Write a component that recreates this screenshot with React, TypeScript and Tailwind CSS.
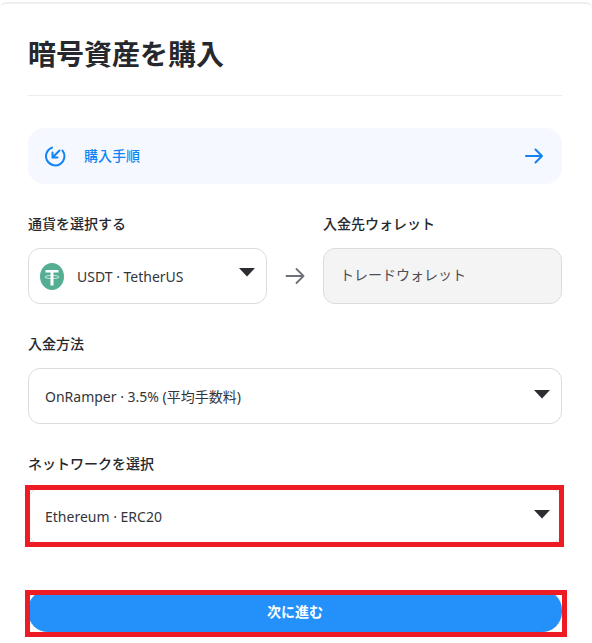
import React from 'react';

const font = { fontFamily: '"Noto Sans", "Noto Sans CJK JP", sans-serif' };

function Caret({ className = '' }: { className?: string }) {
  return (
    <svg width="16" height="9" viewBox="0 0 16 9" className={className}>
      <path d="M0 0h16L8 8.500z" fill="#2b2d33" />
    </svg>
  );
}

function Select({ children }: { children: React.ReactNode }) {
  return (
    <div className="flex h-14 items-center justify-between rounded-xl border border-[#dcdcdc] bg-white pl-4 pr-[11px]">
      <span className="text-[14px] text-[#33353b]">{children}</span>
      <Caret className="-mt-1" />
    </div>
  );
}

function Label({ children }: { children: React.ReactNode }) {
  return <div className="mb-[14px] h-5 text-[14px] leading-5 font-medium text-[#26282d]">{children}</div>;
}

export default function App() {
  return (
    <div style={font} className="h-[643px] w-[592px] overflow-hidden bg-white pt-0.5">
      <div className="h-[641px] rounded-t-[6px] border-t-2 border-[#eeeeee] pl-7 pr-[30px] pt-[30px]">
        <h1 className="h-10 text-[28px] leading-10 font-bold text-[#26282d]">暗号資産を購入</h1>
        <div className="mt-[21px] h-px bg-[#eaecef]" />

        {/* Guide banner */}
        <div className="mt-8 flex h-14 items-center justify-between rounded-2xl bg-[#f5f9ff] pl-4 pr-[19px]">
          <div className="flex items-center">
            <svg width="22" height="24" viewBox="0 0 22 24" fill="none" stroke="#1283f4" strokeWidth="2" strokeLinecap="round">
              <path d="M8 3.600a9.200 9.200 0 1 0 10.500 3" />
              <path d="M15.500 6.500 8.500 13.500M8.500 8.500v5h5" />
            </svg>
            <span className="ml-[18px] -mt-px text-[14px] font-medium text-[#1283f4]">購入手順</span>
          </div>
          <svg width="18" height="16" viewBox="0 0 18 16" fill="none" stroke="#1283f4" strokeWidth="2" strokeLinecap="round" strokeLinejoin="round">
            <path d="M1 8h16M10.500 1.500 17 8l-6.500 6.500" />
          </svg>
        </div>

        {/* Currency and wallet */}
        <div className="mt-[30px] flex items-end">
          <div className="w-[239px]">
            <Label>通貨を選択する</Label>
            <div className="flex h-14 items-center justify-between rounded-xl border border-[#dcdcdc] bg-white pl-[11px] pr-[11px]">
              <div className="flex items-center">
                <svg width="24" height="27" viewBox="0 0 24 27">
                  <ellipse cx="12" cy="13.500" rx="12" ry="13.500" fill="#53ae94" />
                  <path d="M5.500 7h13v2.600h-5v12.900h-3V9.600h-5z" fill="#fff" />
                  <ellipse cx="12" cy="14" rx="7" ry="1.600" fill="none" stroke="#fff" strokeOpacity="0.7" />
                </svg>
                <span className="ml-[13px] text-[14px] text-[#33353b]">USDT · TetherUS</span>
              </div>
              <Caret className="-mt-[7px]" />
            </div>
          </div>
          <div className="flex h-14 w-14 items-center justify-center">
            <svg width="20" height="16" viewBox="0 0 20 16" fill="none" stroke="#6f7178" strokeWidth="1.800" strokeLinecap="round" strokeLinejoin="round">
              <path d="M1.500 8h17M11.500 1l7 7-7 7" />
            </svg>
          </div>
          <div className="flex-1">
            <Label>入金先ウォレット</Label>
            <div className="flex h-14 items-center rounded-xl border border-[#dcdcdc] bg-[#f4f4f4] pl-4">
              <span className="-mt-[3px] text-[14px] text-[#4c4e54]">トレードウォレット</span>
            </div>
          </div>
        </div>

        {/* Deposit method */}
        <div className="mt-[30px]">
          <Label>入金方法</Label>
          <Select>OnRamper · 3.5% (平均手数料)</Select>
        </div>

        {/* Network, red box is an annotation on top */}
        <div className="relative mt-[30px]">
          <Label>ネットワークを選択</Label>
          <Select>Ethereum · ERC20</Select>
          <div className="pointer-events-none absolute -left-[3px] -right-[2px] top-[31px] h-[62px] border-[5px] border-[#ed1c24]" />
        </div>

        <div className="relative mt-[46px]">
          <button className="h-[42px] w-full rounded-[20px] bg-[#2491fb] text-[14px] font-bold text-white">次に進む</button>
          <div className="pointer-events-none absolute -left-[3px] -right-[5px] top-0 h-[47px] border-[5px] border-[#ed1c24]" />
        </div>
      </div>
    </div>
  );
}
